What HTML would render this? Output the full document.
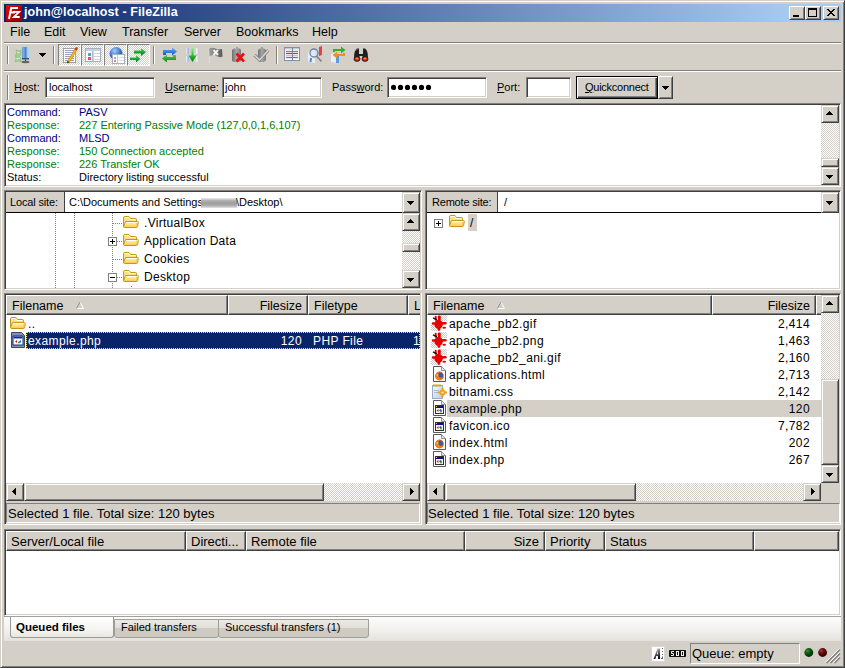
<!DOCTYPE html><html><head><meta charset="utf-8"><style>
html,body{margin:0;padding:0;width:845px;height:668px;overflow:hidden;background:#d4d0c8;}
body{position:relative;font-family:"Liberation Sans",sans-serif;font-size:11px;}
body div{position:absolute;box-sizing:border-box;}
svg{position:absolute;}
</style></head><body>
<div style="left:0px;top:0px;width:845px;height:668px;border:1px solid;border-color:#d4d0c8 #404040 #404040 #d4d0c8;box-shadow:inset 1px 1px #fff,inset -1px -1px #808080;"></div>
<div style="left:4px;top:4px;width:837px;height:18px;background:linear-gradient(to right,#0a246a,#a6caf0 94%);"></div>
<svg style="left:6px;top:5px" width="16" height="16" viewBox="0 0 16 16"><defs><linearGradient id="fzg" x1="0" y1="0" x2="1" y2="1"><stop offset="0" stop-color="#e80808"/><stop offset="1" stop-color="#8c0000"/></linearGradient></defs><rect width="16" height="16" fill="url(#fzg)"/><g stroke="#fff" fill="none" stroke-width="2" stroke-linecap="square"><path d="M3.2 13 L5.2 3 H11"/><path d="M4.3 7.5 H8"/><path d="M7.8 6.8 H13.2 L7.8 12 H12.8" stroke-width="1.8" stroke-linejoin="miter"/></g></svg>
<div style="left:24px;top:5px;font-size:12.5px;line-height:14.5px;color:#fff;font-weight:700;white-space:pre;line-height:14px;letter-spacing:0.1px;">john@localhost - FileZilla</div>
<div style="left:789px;top:6px;width:16px;height:14px;border:1px solid;border-color:#fff #404040 #404040 #fff;box-shadow:inset 1px 1px #d4d0c8,inset -1px -1px #808080;background:#d4d0c8;"></div>
<div style="left:805px;top:6px;width:16px;height:14px;border:1px solid;border-color:#fff #404040 #404040 #fff;box-shadow:inset 1px 1px #d4d0c8,inset -1px -1px #808080;background:#d4d0c8;"></div>
<div style="left:823px;top:6px;width:16px;height:14px;border:1px solid;border-color:#fff #404040 #404040 #fff;box-shadow:inset 1px 1px #d4d0c8,inset -1px -1px #808080;background:#d4d0c8;"></div>
<div style="left:793px;top:15px;width:6px;height:2px;background:#000"></div>
<div style="left:808px;top:8px;width:9px;height:9px;border:1px solid #000;border-top-width:2px"></div>
<svg style="left:827px;top:9px" width="8" height="7" fill="#000" shape-rendering="crispEdges"><rect x="0" y="0" width="1" height="1"/><rect x="1" y="0" width="1" height="1"/><rect x="6" y="0" width="1" height="1"/><rect x="7" y="0" width="1" height="1"/><rect x="1" y="1" width="1" height="1"/><rect x="2" y="1" width="1" height="1"/><rect x="5" y="1" width="1" height="1"/><rect x="6" y="1" width="1" height="1"/><rect x="2" y="2" width="1" height="1"/><rect x="3" y="2" width="1" height="1"/><rect x="4" y="2" width="1" height="1"/><rect x="5" y="2" width="1" height="1"/><rect x="3" y="3" width="1" height="1"/><rect x="4" y="3" width="1" height="1"/><rect x="2" y="4" width="1" height="1"/><rect x="3" y="4" width="1" height="1"/><rect x="4" y="4" width="1" height="1"/><rect x="5" y="4" width="1" height="1"/><rect x="1" y="5" width="1" height="1"/><rect x="2" y="5" width="1" height="1"/><rect x="5" y="5" width="1" height="1"/><rect x="6" y="5" width="1" height="1"/><rect x="0" y="6" width="1" height="1"/><rect x="1" y="6" width="1" height="1"/><rect x="6" y="6" width="1" height="1"/><rect x="7" y="6" width="1" height="1"/></svg>
<div style="left:10px;top:25px;font-size:12.5px;line-height:14.5px;color:#000;font-weight:400;white-space:pre;">File</div>
<div style="left:44px;top:25px;font-size:12.5px;line-height:14.5px;color:#000;font-weight:400;white-space:pre;">Edit</div>
<div style="left:80px;top:25px;font-size:12.5px;line-height:14.5px;color:#000;font-weight:400;white-space:pre;">View</div>
<div style="left:122px;top:25px;font-size:12.5px;line-height:14.5px;color:#000;font-weight:400;white-space:pre;">Transfer</div>
<div style="left:184px;top:25px;font-size:12.5px;line-height:14.5px;color:#000;font-weight:400;white-space:pre;">Server</div>
<div style="left:236px;top:25px;font-size:12.5px;line-height:14.5px;color:#000;font-weight:400;white-space:pre;">Bookmarks</div>
<div style="left:312px;top:25px;font-size:12.5px;line-height:14.5px;color:#000;font-weight:400;white-space:pre;">Help</div>
<div style="left:4px;top:42px;width:837px;height:1px;background:#808080"></div>
<div style="left:4px;top:43px;width:837px;height:1px;background:#fff"></div>
<div style="left:7px;top:46px;width:1px;height:18px;background:#808080"></div>
<div style="left:8px;top:46px;width:1px;height:18px;background:#fff"></div>
<div style="left:53px;top:46px;width:1px;height:18px;background:#808080"></div>
<div style="left:54px;top:46px;width:1px;height:18px;background:#fff"></div>
<div style="left:153px;top:46px;width:1px;height:18px;background:#808080"></div>
<div style="left:154px;top:46px;width:1px;height:18px;background:#fff"></div>
<div style="left:276px;top:46px;width:1px;height:18px;background:#808080"></div>
<div style="left:277px;top:46px;width:1px;height:18px;background:#fff"></div>
<div style="left:39px;top:53px;width:7px;height:1px;background:#000"></div>
<div style="left:40px;top:54px;width:5px;height:1px;background:#000"></div>
<div style="left:41px;top:55px;width:3px;height:1px;background:#000"></div>
<div style="left:42px;top:56px;width:1px;height:1px;background:#000"></div>
<div style="left:58px;top:44px;width:23px;height:22px;border:1px solid;border-color:#808080 #fff #fff #808080;background:repeating-conic-gradient(#fff 0 25%,#d4d0c8 0 50%) 0 0/2px 2px;"></div>
<div style="left:81px;top:44px;width:23px;height:22px;border:1px solid;border-color:#808080 #fff #fff #808080;background:repeating-conic-gradient(#fff 0 25%,#d4d0c8 0 50%) 0 0/2px 2px;"></div>
<div style="left:104px;top:44px;width:23px;height:22px;border:1px solid;border-color:#808080 #fff #fff #808080;background:repeating-conic-gradient(#fff 0 25%,#d4d0c8 0 50%) 0 0/2px 2px;"></div>
<div style="left:127px;top:44px;width:23px;height:22px;border:1px solid;border-color:#808080 #fff #fff #808080;background:repeating-conic-gradient(#fff 0 25%,#d4d0c8 0 50%) 0 0/2px 2px;"></div>
<div style="left:4px;top:70px;width:837px;height:1px;background:#808080"></div>
<div style="left:4px;top:71px;width:837px;height:1px;background:#fff"></div>
<svg style="left:13px;top:46px" width="18" height="18" viewBox="0 0 18 18"><defs><linearGradient id="srv" x1="0" x2="1"><stop offset="0" stop-color="#6c98dc"/><stop offset="0.5" stop-color="#9cc0ec"/><stop offset="1" stop-color="#a8d4f0"/></linearGradient></defs><path d="M3 4 L6 5 L8 4 L8 9 L6 10 L8 12 L8 16 L5 15 L2 16 L3 12 L2 9 L4 8 Z" fill="#9ccf8c" stroke="#8fb67f" stroke-width="0.6"/><path d="M4 6 L7 7 M3 13 L7 12" stroke="#d8f0d0" stroke-width="1"/><rect x="9" y="1" width="7" height="12" fill="url(#srv)"/><rect x="11.5" y="1" width="2" height="12" fill="#4f7fc8"/><rect x="9" y="12" width="7" height="1.5" fill="#2a4f90"/><rect x="12" y="13.5" width="1" height="1.5" fill="#404040"/><ellipse cx="12.5" cy="16" rx="4" ry="1.2" fill="#404040" opacity="0.75"/></svg>
<svg style="left:62px;top:47px" width="17" height="17" viewBox="0 0 17 17"><rect x="1.5" y="1.5" width="12" height="14" fill="#fff" stroke="#a0a0a0"/><path d="M3 3.5 h9" stroke="#9aa0c0" stroke-width="1"/><path d="M3 5.5 h9" stroke="#9aa0c0" stroke-width="1"/><path d="M3 7.5 h9" stroke="#9aa0c0" stroke-width="1"/><path d="M3 9.5 h9" stroke="#9aa0c0" stroke-width="1"/><path d="M3 11.5 h9" stroke="#9aa0c0" stroke-width="1"/><path d="M3 13.5 h9" stroke="#9aa0c0" stroke-width="1"/><path d="M6 15.5 L14.5 1.5" stroke="#d09000" stroke-width="2.6"/><path d="M6 15.5 L14.5 1.5" stroke="#f8c020" stroke-width="1.4"/><path d="M13.5 3 L15 0.5" stroke="#c04020" stroke-width="2.4"/><path d="M5.5 16 L6.5 14.5" stroke="#303030" stroke-width="1.5"/></svg>
<svg style="left:84px;top:47px" width="17" height="16" viewBox="0 0 17 16"><rect x="1.5" y="1.5" width="15" height="13" fill="#fff" stroke="#a8b0c0"/><rect x="2" y="2" width="14" height="2" fill="#c8d0dc"/><rect x="8" y="4" width="1.6" height="10" fill="#b0b8c8"/><rect x="4" y="6" width="3" height="3" fill="#5a9ae0"/><rect x="4" y="10" width="3" height="3" fill="#e05060"/><path d="M10 6.5 h6 M10 9.5 h6 M10 12.5 h6" stroke="#d0d4da" stroke-width="1"/></svg>
<svg style="left:108px;top:46px" width="17" height="18" viewBox="0 0 17 18"><defs><radialGradient id="glb" cx="0.4" cy="0.3" r="0.7"><stop offset="0" stop-color="#a8ccf8"/><stop offset="0.6" stop-color="#3a78d8"/><stop offset="1" stop-color="#1848a8"/></radialGradient></defs><circle cx="8" cy="7.5" r="6.5" fill="url(#glb)"/><rect x="4.5" y="8.5" width="12" height="9" fill="#fff" stroke="#a8b0c0"/><rect x="9" y="9" width="1" height="8" fill="#c0c8d8"/><rect x="6" y="11" width="2" height="2" fill="#8ab0e0"/><rect x="6" y="14" width="2" height="2" fill="#f08080"/><path d="M11 11.5 h5 M11 14.5 h5" stroke="#d8dce2"/></svg>
<svg style="left:129px;top:47px" width="18" height="17" viewBox="0 0 18 17"><defs><linearGradient id="ga" x1="0" y1="0" x2="0" y2="1"><stop offset="0" stop-color="#60e060"/><stop offset="0.6" stop-color="#10a020"/><stop offset="1" stop-color="#087018"/></linearGradient></defs><path d="M5 3.5 h7 v-2.5 l5 4 l-5 4 v-2.5 h-7 z" fill="url(#ga)"/><path d="M1 10.5 h6 v-2.5 l4.5 3.7 l-4.5 3.8 v-2.5 h-6 z" fill="url(#ga)"/></svg>
<svg style="left:161px;top:46px" width="17" height="18" viewBox="0 0 17 18"><defs><linearGradient id="rb" x1="0" y1="0" x2="0" y2="1"><stop offset="0" stop-color="#70b0f8"/><stop offset="1" stop-color="#1050c8"/></linearGradient><linearGradient id="rg" x1="0" y1="0" x2="0" y2="1"><stop offset="0" stop-color="#50d050"/><stop offset="1" stop-color="#108020"/></linearGradient></defs><path d="M2 9 V4 h9 V1.5 l5 4 l-5 4 V7 H5 v2 z" fill="url(#rb)"/><path d="M15 9 v5 h-9 v2.5 l-5 -4 l5 -4 V11 h6 V9 z" fill="url(#rg)"/></svg>
<svg style="left:184px;top:46px" width="17" height="18" viewBox="0 0 17 18"><defs><linearGradient id="pq" x1="0" y1="0" x2="0" y2="1"><stop offset="0" stop-color="#a0f8a0"/><stop offset="0.5" stop-color="#30c030"/><stop offset="1" stop-color="#087818"/></linearGradient><linearGradient id="pqb" x1="0" x2="1"><stop offset="0" stop-color="#f0f8ff"/><stop offset="1" stop-color="#80b0e0"/></linearGradient><linearGradient id="pqw" x1="0" x2="1"><stop offset="0" stop-color="#ffffff"/><stop offset="1" stop-color="#c0c0c0"/></linearGradient></defs><path d="M2.5 2 h2 v6 h-2.5 z M2 10 h2.5 v6 h-2.5 z" fill="url(#pqb)"/><path d="M12 2 h2.5 l0.5 6 h-3 z M12 10 h3 l-0.5 6 h-2.5 z" fill="url(#pqw)"/><path d="M7.5 1 h2 v8.5 h3 l-4 6.5 l-4 -6.5 h3 z" fill="url(#pq)"/></svg>
<svg style="left:208px;top:46px" width="16" height="18" viewBox="0 0 16 18"><defs><linearGradient id="flg" x1="0" x2="1"><stop offset="0" stop-color="#a0a0a0"/><stop offset="0.5" stop-color="#7a7a7a"/><stop offset="1" stop-color="#5a5a5a"/></linearGradient></defs><path d="M1 2 L1.5 17" stroke="#e0e0e0"/><path d="M1 2.5 Q4 1 7.5 2.5 T14 3 L14.5 10.5 Q11.5 12 8.5 10 T1.5 10.5 Z" fill="url(#flg)"/><path d="M5.5 4 L10 9 M10 4 L5.5 9" stroke="#f4f4f4" stroke-width="2"/></svg>
<svg style="left:231px;top:46px" width="16" height="18" viewBox="0 0 16 18"><defs><linearGradient id="dev" x1="0" x2="1"><stop offset="0" stop-color="#707070"/><stop offset="0.5" stop-color="#a8a8a8"/><stop offset="1" stop-color="#787878"/></linearGradient></defs><path d="M1 4 L3 2.5 h2 V1 h2 v1.5 h2 L10 4 V15 L8 16 H3 L1 15 Z" fill="url(#dev)"/><path d="M5.5 7.5 L13 15.5 M13 7.5 L5.5 15.5" stroke="#e81010" stroke-width="2.6"/></svg>
<svg style="left:253px;top:46px" width="17" height="18" viewBox="0 0 17 18"><path d="M5 4 L7 2.5 h1 V1 h2 v1.5 h1 L13 4 V14 L11 16 H7 L5 14 Z" fill="url(#dev)"/><path d="M1.5 9 L6.5 14 L15.5 4" stroke="#8a8a8a" stroke-width="3.2" fill="none"/><path d="M1.5 9 L6.5 14 L15.5 4" stroke="#d8d8d8" stroke-width="1.4" fill="none"/></svg>
<svg style="left:284px;top:47px" width="17" height="15" viewBox="0 0 17 15"><rect x="0.5" y="0.5" width="15" height="13" fill="#f8f8ff" stroke="#8c8c9c"/><rect x="1" y="1" width="14" height="1.5" fill="#c8ccd8"/><path d="M2 4.5 h12" stroke="#30c030" stroke-width="1.2"/><path d="M2 6.5 h12" stroke="#e03030" stroke-width="1.2"/><path d="M2 8.5 h12" stroke="#f0d020" stroke-width="1.2"/><path d="M2 10.5 h12" stroke="#3080e0" stroke-width="1.2"/><rect x="8" y="1" width="1" height="12" fill="#7880a0"/></svg>
<svg style="left:307px;top:46px" width="17" height="18" viewBox="0 0 17 18"><path d="M12 1 L15 0 V9 L12 10 Z" fill="#e04050"/><path d="M1 6 L8 3 V17 L1 16 Z" fill="#e8eef4"/><path d="M9.5 10 L14.5 15.5" stroke="#808080" stroke-width="1.6"/><circle cx="7" cy="7" r="4" fill="#d8e8f8" fill-opacity="0.6" stroke="#6880a0" stroke-width="1.3"/><path d="M4 12 L3.5 16" stroke="#4a8ad0" stroke-width="2"/></svg>
<svg style="left:330px;top:45px" width="17" height="19" viewBox="0 0 17 19"><path d="M1 9 L7 7 V18 L1 17 Z" fill="#e8eef8"/><path d="M6 9 h3 v9 h-3z" fill="#5a9ae0"/><path d="M3 7 V4 h8 V1.5 l4.5 3.5 l-4.5 3.5 V6 H5 v1 z" fill="#30b030"/><path d="M15 8 v3 H7 v2.5 l-4.5 -3.5 l4.5 -3.5 V9 h6 V8 z" fill="#f09020"/></svg>
<svg style="left:353px;top:47px" width="16" height="16" viewBox="0 0 16 16"><path d="M1 11 Q1 3 4 1.5 h2 V7 h4 V1.5 h2 Q15 3 15 11 h-5.5 V9 h-3 v2 Z" fill="#202020"/><path d="M2.5 4 Q3.5 2 5 2" stroke="#808080" stroke-width="0.8" fill="none"/><ellipse cx="4" cy="12" rx="3" ry="2.3" fill="#d02000" stroke="#202020"/><ellipse cx="12" cy="12" rx="3" ry="2.3" fill="#d02000" stroke="#202020"/><ellipse cx="4" cy="11.6" rx="1.6" ry="1" fill="#ff8040"/><ellipse cx="12" cy="11.6" rx="1.6" ry="1" fill="#ff8040"/></svg>
<div style="left:7px;top:75px;width:1px;height:25px;background:#808080"></div>
<div style="left:8px;top:75px;width:1px;height:25px;background:#fff"></div>
<div style="left:14px;top:81px;font-size:11px;line-height:13px;color:#000;font-weight:400;white-space:pre;"><u>H</u>ost:</div>
<div style="left:45px;top:77px;width:110px;height:21px;border:1px solid;border-color:#808080 #fff #fff #808080;box-shadow:inset 1px 1px #404040,inset -1px -1px #d4d0c8;background:#fff;"></div>
<div style="left:49px;top:81px;font-size:11px;line-height:13px;color:#000;font-weight:400;white-space:pre;">localhost</div>
<div style="left:165px;top:81px;font-size:11px;line-height:13px;color:#000;font-weight:400;white-space:pre;"><u>U</u>sername:</div>
<div style="left:222px;top:77px;width:100px;height:21px;border:1px solid;border-color:#808080 #fff #fff #808080;box-shadow:inset 1px 1px #404040,inset -1px -1px #d4d0c8;background:#fff;"></div>
<div style="left:225px;top:81px;font-size:11px;line-height:13px;color:#000;font-weight:400;white-space:pre;">john</div>
<div style="left:332px;top:81px;font-size:11px;line-height:13px;color:#000;font-weight:400;white-space:pre;">Pass<u>w</u>ord:</div>
<div style="left:387px;top:77px;width:100px;height:21px;border:1px solid;border-color:#808080 #fff #fff #808080;box-shadow:inset 1px 1px #404040,inset -1px -1px #d4d0c8;background:#fff;"></div>
<svg style="left:391px;top:83px" width="50" height="9"><circle cx="2.5" cy="4.4" r="2.6" fill="#000"/><circle cx="9.5" cy="4.4" r="2.6" fill="#000"/><circle cx="16.5" cy="4.4" r="2.6" fill="#000"/><circle cx="23.5" cy="4.4" r="2.6" fill="#000"/><circle cx="30.5" cy="4.4" r="2.6" fill="#000"/><circle cx="37.5" cy="4.4" r="2.6" fill="#000"/></svg>
<div style="left:497px;top:81px;font-size:11px;line-height:13px;color:#000;font-weight:400;white-space:pre;"><u>P</u>ort:</div>
<div style="left:526px;top:77px;width:45px;height:21px;border:1px solid;border-color:#808080 #fff #fff #808080;box-shadow:inset 1px 1px #404040,inset -1px -1px #d4d0c8;background:#fff;"></div>
<div style="left:576px;top:76px;width:82px;height:23px;border:1px solid #000;box-shadow:inset 1px 1px #fff,inset -1px -1px #404040,inset -2px -2px #808080;background:#d4d0c8"></div>
<div style="left:585px;top:81px;font-size:11px;line-height:13px;color:#000;font-weight:400;white-space:pre;letter-spacing:-0.25px;"><u>Q</u>uickconnect</div>
<div style="left:658px;top:76px;width:15px;height:23px;border:1px solid;border-color:#fff #404040 #404040 #fff;box-shadow:inset 1px 1px #d4d0c8,inset -1px -1px #808080;background:#d4d0c8;"></div>
<div style="left:662px;top:86px;width:7px;height:1px;background:#000"></div>
<div style="left:663px;top:87px;width:5px;height:1px;background:#000"></div>
<div style="left:664px;top:88px;width:3px;height:1px;background:#000"></div>
<div style="left:665px;top:89px;width:1px;height:1px;background:#000"></div>
<div style="left:4px;top:103px;width:837px;height:84px;border:1px solid;border-color:#808080 #fff #fff #808080;box-shadow:inset 1px 1px #404040,inset -1px -1px #d4d0c8;background:#fff;"></div>
<div style="left:7px;top:106px;font-size:11px;line-height:13px;color:#000080;font-weight:400;white-space:pre;">Command:</div>
<div style="left:79px;top:106px;font-size:11px;line-height:13px;color:#000080;font-weight:400;white-space:pre;">PASV</div>
<div style="left:7px;top:119px;font-size:11px;line-height:13px;color:#008000;font-weight:400;white-space:pre;">Response:</div>
<div style="left:79px;top:119px;font-size:11px;line-height:13px;color:#008000;font-weight:400;white-space:pre;">227 Entering Passive Mode (127,0,0,1,6,107)</div>
<div style="left:7px;top:132px;font-size:11px;line-height:13px;color:#000080;font-weight:400;white-space:pre;">Command:</div>
<div style="left:79px;top:132px;font-size:11px;line-height:13px;color:#000080;font-weight:400;white-space:pre;">MLSD</div>
<div style="left:7px;top:145px;font-size:11px;line-height:13px;color:#008000;font-weight:400;white-space:pre;">Response:</div>
<div style="left:79px;top:145px;font-size:11px;line-height:13px;color:#008000;font-weight:400;white-space:pre;">150 Connection accepted</div>
<div style="left:7px;top:158px;font-size:11px;line-height:13px;color:#008000;font-weight:400;white-space:pre;">Response:</div>
<div style="left:79px;top:158px;font-size:11px;line-height:13px;color:#008000;font-weight:400;white-space:pre;">226 Transfer OK</div>
<div style="left:7px;top:171px;font-size:11px;line-height:13px;color:#000;font-weight:400;white-space:pre;">Status:</div>
<div style="left:79px;top:171px;font-size:11px;line-height:13px;color:#000;font-weight:400;white-space:pre;">Directory listing successful</div>
<div style="left:821px;top:105px;width:18px;height:80px;background:repeating-conic-gradient(#fff 0 25%,#d4d0c8 0 50%) 0 0/2px 2px;"></div>
<div style="left:821px;top:105px;width:18px;height:18px;border:1px solid;border-color:#d4d0c8 #404040 #404040 #d4d0c8;box-shadow:inset 1px 1px #fff,inset -1px -1px #808080;background:#d4d0c8;"></div>
<div style="left:829px;top:111px;width:1px;height:1px;background:#000"></div>
<div style="left:828px;top:112px;width:3px;height:1px;background:#000"></div>
<div style="left:827px;top:113px;width:5px;height:1px;background:#000"></div>
<div style="left:826px;top:114px;width:7px;height:1px;background:#000"></div>
<div style="left:821px;top:167px;width:18px;height:18px;border:1px solid;border-color:#d4d0c8 #404040 #404040 #d4d0c8;box-shadow:inset 1px 1px #fff,inset -1px -1px #808080;background:#d4d0c8;"></div>
<div style="left:826px;top:175px;width:7px;height:1px;background:#000"></div>
<div style="left:827px;top:176px;width:5px;height:1px;background:#000"></div>
<div style="left:828px;top:177px;width:3px;height:1px;background:#000"></div>
<div style="left:829px;top:178px;width:1px;height:1px;background:#000"></div>
<div style="left:821px;top:158px;width:18px;height:9px;border:1px solid;border-color:#d4d0c8 #404040 #404040 #d4d0c8;box-shadow:inset 1px 1px #fff,inset -1px -1px #808080;background:#d4d0c8;"></div>
<div style="left:4px;top:190px;width:418px;height:100px;border:1px solid;border-color:#808080 #fff #fff #808080;box-shadow:inset 1px 1px #404040,inset -1px -1px #d4d0c8;background:#fff;"></div>
<div style="left:6px;top:192px;width:58px;height:20px;background:#d4d0c8"></div>
<div style="left:10px;top:196px;font-size:11px;line-height:13px;color:#000;font-weight:400;white-space:pre;letter-spacing:-0.15px;">Local site:</div>
<div style="left:64px;top:192px;width:1px;height:20px;background:#404040"></div>
<div style="left:6px;top:212px;width:396px;height:1px;background:#000"></div>
<div style="left:69px;top:196px;font-size:11px;line-height:13px;color:#000;font-weight:400;white-space:pre;">C:\Documents and Settings</div>
<div style="left:201px;top:198px;width:36px;height:10px;background:linear-gradient(#ececec,#b4b4b4 25%,#9c9c9c 50%,#acacac 75%,#e4e4e4)"></div>
<div style="left:236px;top:196px;font-size:11px;line-height:13px;color:#000;font-weight:400;white-space:pre;">\Desktop\</div>
<div style="left:402px;top:192px;width:18px;height:21px;border:1px solid;border-color:#d4d0c8 #404040 #404040 #d4d0c8;box-shadow:inset 1px 1px #fff,inset -1px -1px #808080;background:#d4d0c8;"></div>
<div style="left:407px;top:201px;width:7px;height:1px;background:#000"></div>
<div style="left:408px;top:202px;width:5px;height:1px;background:#000"></div>
<div style="left:409px;top:203px;width:3px;height:1px;background:#000"></div>
<div style="left:410px;top:204px;width:1px;height:1px;background:#000"></div>
<div style="left:402px;top:213px;width:18px;height:75px;background:repeating-conic-gradient(#fff 0 25%,#d4d0c8 0 50%) 0 0/2px 2px;"></div>
<div style="left:402px;top:213px;width:18px;height:18px;border:1px solid;border-color:#d4d0c8 #404040 #404040 #d4d0c8;box-shadow:inset 1px 1px #fff,inset -1px -1px #808080;background:#d4d0c8;"></div>
<div style="left:410px;top:219px;width:1px;height:1px;background:#000"></div>
<div style="left:409px;top:220px;width:3px;height:1px;background:#000"></div>
<div style="left:408px;top:221px;width:5px;height:1px;background:#000"></div>
<div style="left:407px;top:222px;width:7px;height:1px;background:#000"></div>
<div style="left:402px;top:270px;width:18px;height:18px;border:1px solid;border-color:#d4d0c8 #404040 #404040 #d4d0c8;box-shadow:inset 1px 1px #fff,inset -1px -1px #808080;background:#d4d0c8;"></div>
<div style="left:407px;top:278px;width:7px;height:1px;background:#000"></div>
<div style="left:408px;top:279px;width:5px;height:1px;background:#000"></div>
<div style="left:409px;top:280px;width:3px;height:1px;background:#000"></div>
<div style="left:410px;top:281px;width:1px;height:1px;background:#000"></div>
<div style="left:402px;top:243px;width:18px;height:9px;border:1px solid;border-color:#d4d0c8 #404040 #404040 #d4d0c8;box-shadow:inset 1px 1px #fff,inset -1px -1px #808080;background:#d4d0c8;"></div>
<div style="left:55px;top:213px;width:1px;height:75px;background:repeating-linear-gradient(to bottom,#808080 0 1px,transparent 1px 2px)"></div>
<div style="left:74px;top:213px;width:1px;height:75px;background:repeating-linear-gradient(to bottom,#808080 0 1px,transparent 1px 2px)"></div>
<div style="left:112px;top:213px;width:1px;height:75px;background:repeating-linear-gradient(to bottom,#808080 0 1px,transparent 1px 2px)"></div>
<div style="left:131px;top:286px;width:1px;height:2px;background:repeating-linear-gradient(to bottom,#808080 0 1px,transparent 1px 2px)"></div>
<div style="left:113px;top:223px;width:10px;height:1px;background:repeating-linear-gradient(to right,#808080 0 1px,transparent 1px 2px)"></div>
<svg style="left:123px;top:214px" width="17" height="16" viewBox="0 0 17 16"><defs><linearGradient id="fg123214" x1="0" y1="0" x2="0" y2="1"><stop offset="0" stop-color="#fff6c0"/><stop offset="0.5" stop-color="#fde47a"/><stop offset="1" stop-color="#f6c84a"/></linearGradient></defs><path d="M0.5 4 Q0.5 2.5 2 2.5 H6 L7.5 4.5 H12.5 Q13.5 4.5 13.5 5.5 V12.5 H0.5 Z" fill="#f8e090" stroke="#c8961a"/><path d="M1.5 3.5 H5.8 L6.8 5.5 H12" stroke="#fffbe8" fill="none"/><path d="M2.5 7.5 H14.5 Q15.5 7.5 15.3 8.5 L14.6 12.5 Q14.5 13.5 13.5 13.5 H1.5 Q0.5 13.5 0.6 12.5 Z" fill="url(#fg123214)" stroke="#c8961a"/><path d="M3 8.5 H14.3" stroke="#fffef0"/><path d="M14 8.5 V13" stroke="#e8b040" stroke-width="0.8"/></svg>
<div style="left:144px;top:216px;font-size:12px;line-height:14px;color:#000;font-weight:400;white-space:pre;letter-spacing:0.3px;">.VirtualBox</div>
<div style="left:113px;top:241px;width:10px;height:1px;background:repeating-linear-gradient(to right,#808080 0 1px,transparent 1px 2px)"></div>
<svg style="left:123px;top:232px" width="17" height="16" viewBox="0 0 17 16"><defs><linearGradient id="fg123232" x1="0" y1="0" x2="0" y2="1"><stop offset="0" stop-color="#fff6c0"/><stop offset="0.5" stop-color="#fde47a"/><stop offset="1" stop-color="#f6c84a"/></linearGradient></defs><path d="M0.5 4 Q0.5 2.5 2 2.5 H6 L7.5 4.5 H12.5 Q13.5 4.5 13.5 5.5 V12.5 H0.5 Z" fill="#f8e090" stroke="#c8961a"/><path d="M1.5 3.5 H5.8 L6.8 5.5 H12" stroke="#fffbe8" fill="none"/><path d="M2.5 7.5 H14.5 Q15.5 7.5 15.3 8.5 L14.6 12.5 Q14.5 13.5 13.5 13.5 H1.5 Q0.5 13.5 0.6 12.5 Z" fill="url(#fg123232)" stroke="#c8961a"/><path d="M3 8.5 H14.3" stroke="#fffef0"/><path d="M14 8.5 V13" stroke="#e8b040" stroke-width="0.8"/></svg>
<div style="left:144px;top:234px;font-size:12px;line-height:14px;color:#000;font-weight:400;white-space:pre;letter-spacing:0.3px;">Application Data</div>
<div style="left:113px;top:259px;width:10px;height:1px;background:repeating-linear-gradient(to right,#808080 0 1px,transparent 1px 2px)"></div>
<svg style="left:123px;top:250px" width="17" height="16" viewBox="0 0 17 16"><defs><linearGradient id="fg123250" x1="0" y1="0" x2="0" y2="1"><stop offset="0" stop-color="#fff6c0"/><stop offset="0.5" stop-color="#fde47a"/><stop offset="1" stop-color="#f6c84a"/></linearGradient></defs><path d="M0.5 4 Q0.5 2.5 2 2.5 H6 L7.5 4.5 H12.5 Q13.5 4.5 13.5 5.5 V12.5 H0.5 Z" fill="#f8e090" stroke="#c8961a"/><path d="M1.5 3.5 H5.8 L6.8 5.5 H12" stroke="#fffbe8" fill="none"/><path d="M2.5 7.5 H14.5 Q15.5 7.5 15.3 8.5 L14.6 12.5 Q14.5 13.5 13.5 13.5 H1.5 Q0.5 13.5 0.6 12.5 Z" fill="url(#fg123250)" stroke="#c8961a"/><path d="M3 8.5 H14.3" stroke="#fffef0"/><path d="M14 8.5 V13" stroke="#e8b040" stroke-width="0.8"/></svg>
<div style="left:144px;top:252px;font-size:12px;line-height:14px;color:#000;font-weight:400;white-space:pre;letter-spacing:0.3px;">Cookies</div>
<div style="left:113px;top:277px;width:10px;height:1px;background:repeating-linear-gradient(to right,#808080 0 1px,transparent 1px 2px)"></div>
<svg style="left:123px;top:268px" width="17" height="16" viewBox="0 0 17 16"><defs><linearGradient id="fg123268" x1="0" y1="0" x2="0" y2="1"><stop offset="0" stop-color="#fff6c0"/><stop offset="0.5" stop-color="#fde47a"/><stop offset="1" stop-color="#f6c84a"/></linearGradient></defs><path d="M0.5 4 Q0.5 2.5 2 2.5 H6 L7.5 4.5 H12.5 Q13.5 4.5 13.5 5.5 V12.5 H0.5 Z" fill="#f8e090" stroke="#c8961a"/><path d="M1.5 3.5 H5.8 L6.8 5.5 H12" stroke="#fffbe8" fill="none"/><path d="M2.5 7.5 H14.5 Q15.5 7.5 15.3 8.5 L14.6 12.5 Q14.5 13.5 13.5 13.5 H1.5 Q0.5 13.5 0.6 12.5 Z" fill="url(#fg123268)" stroke="#c8961a"/><path d="M3 8.5 H14.3" stroke="#fffef0"/><path d="M14 8.5 V13" stroke="#e8b040" stroke-width="0.8"/></svg>
<div style="left:144px;top:270px;font-size:12px;line-height:14px;color:#000;font-weight:400;white-space:pre;letter-spacing:0.3px;">Desktop</div>
<div style="left:108px;top:237px;width:9px;height:9px;border:1px solid #808080;background:#fff"></div>
<div style="left:110px;top:241px;width:5px;height:1px;background:#000"></div>
<div style="left:112px;top:239px;width:1px;height:5px;background:#000"></div>
<div style="left:108px;top:273px;width:9px;height:9px;border:1px solid #808080;background:#fff"></div>
<div style="left:110px;top:277px;width:5px;height:1px;background:#000"></div>
<div style="left:425px;top:190px;width:416px;height:100px;border:1px solid;border-color:#808080 #fff #fff #808080;box-shadow:inset 1px 1px #404040,inset -1px -1px #d4d0c8;background:#fff;"></div>
<div style="left:427px;top:192px;width:70px;height:20px;background:#d4d0c8"></div>
<div style="left:432px;top:196px;font-size:11px;line-height:13px;color:#000;font-weight:400;white-space:pre;letter-spacing:-0.2px;">Remote site:</div>
<div style="left:497px;top:192px;width:1px;height:20px;background:#404040"></div>
<div style="left:427px;top:212px;width:412px;height:1px;background:#000"></div>
<div style="left:504px;top:196px;font-size:11px;line-height:13px;color:#000;font-weight:400;white-space:pre;">/</div>
<div style="left:821px;top:192px;width:18px;height:21px;border:1px solid;border-color:#d4d0c8 #404040 #404040 #d4d0c8;box-shadow:inset 1px 1px #fff,inset -1px -1px #808080;background:#d4d0c8;"></div>
<div style="left:826px;top:201px;width:7px;height:1px;background:#000"></div>
<div style="left:827px;top:202px;width:5px;height:1px;background:#000"></div>
<div style="left:828px;top:203px;width:3px;height:1px;background:#000"></div>
<div style="left:829px;top:204px;width:1px;height:1px;background:#000"></div>
<div style="left:434px;top:219px;width:9px;height:9px;border:1px solid #808080;background:#fff"></div>
<div style="left:436px;top:223px;width:5px;height:1px;background:#000"></div>
<div style="left:438px;top:221px;width:1px;height:5px;background:#000"></div>
<svg style="left:449px;top:213px" width="17" height="16" viewBox="0 0 17 16"><defs><linearGradient id="fg449213" x1="0" y1="0" x2="0" y2="1"><stop offset="0" stop-color="#fff6c0"/><stop offset="0.5" stop-color="#fde47a"/><stop offset="1" stop-color="#f6c84a"/></linearGradient></defs><path d="M0.5 4 Q0.5 2.5 2 2.5 H6 L7.5 4.5 H12.5 Q13.5 4.5 13.5 5.5 V12.5 H0.5 Z" fill="#f8e090" stroke="#c8961a"/><path d="M1.5 3.5 H5.8 L6.8 5.5 H12" stroke="#fffbe8" fill="none"/><path d="M2.5 7.5 H14.5 Q15.5 7.5 15.3 8.5 L14.6 12.5 Q14.5 13.5 13.5 13.5 H1.5 Q0.5 13.5 0.6 12.5 Z" fill="url(#fg449213)" stroke="#c8961a"/><path d="M3 8.5 H14.3" stroke="#fffef0"/><path d="M14 8.5 V13" stroke="#e8b040" stroke-width="0.8"/></svg>
<div style="left:468px;top:214px;width:9px;height:17px;background:#d4d0c8"></div>
<div style="left:470px;top:216px;font-size:12px;line-height:14px;color:#000;font-weight:400;white-space:pre;">/</div>
<div style="left:4px;top:293px;width:418px;height:232px;border:1px solid;border-color:#808080 #fff #fff #808080;box-shadow:inset 1px 1px #404040,inset -1px -1px #d4d0c8;background:#d4d0c8;"></div>
<div style="left:6px;top:315px;width:414px;height:168px;background:#fff"></div>
<div style="left:6px;top:295px;width:222px;height:20px;border-style:solid;border-width:1px 1px 1px 1px;border-color:#fff #404040 #404040 #fff;box-shadow:inset -1px -1px #808080;background:#d4d0c8"></div>
<div style="left:12px;top:299px;font-size:12.5px;line-height:14.5px;color:#000;font-weight:400;white-space:pre;">Filename</div>
<div style="left:228px;top:295px;width:80px;height:20px;border-style:solid;border-width:1px 1px 1px 1px;border-color:#fff #404040 #404040 #fff;box-shadow:inset -1px -1px #808080;background:#d4d0c8"></div>
<div style="right:543px;top:299px;font-size:12.5px;line-height:14.5px;color:#000;white-space:pre;text-align:right;">Filesize</div>
<div style="left:308px;top:295px;width:100px;height:20px;border-style:solid;border-width:1px 1px 1px 1px;border-color:#fff #404040 #404040 #fff;box-shadow:inset -1px -1px #808080;background:#d4d0c8"></div>
<div style="left:314px;top:299px;font-size:12.5px;line-height:14.5px;color:#000;font-weight:400;white-space:pre;">Filetype</div>
<div style="left:408px;top:295px;width:33px;height:20px;border-style:solid;border-width:1px 1px 1px 1px;border-color:#fff #404040 #404040 #fff;box-shadow:inset -1px -1px #808080;background:#d4d0c8"></div>
<div style="left:414px;top:299px;font-size:12.5px;line-height:14.5px;color:#000;font-weight:400;white-space:pre;">L</div>
<div style="left:420px;top:293px;width:5px;height:24px;background:#d4d0c8"></div>
<div style="left:421px;top:293px;width:1px;height:232px;background:#fff"></div>
<svg style="left:76px;top:301px" width="9" height="9"><path d="M4 1 L7.5 7.5 L0.5 7.5 Z" fill="none" stroke="#fff"/><path d="M4 1 L0.5 7.5" stroke="#808080"/></svg>
<svg style="left:10px;top:315px" width="17" height="16" viewBox="0 0 17 16"><defs><linearGradient id="fg10315" x1="0" y1="0" x2="0" y2="1"><stop offset="0" stop-color="#fff6c0"/><stop offset="0.5" stop-color="#fde47a"/><stop offset="1" stop-color="#f6c84a"/></linearGradient></defs><path d="M0.5 4 Q0.5 2.5 2 2.5 H6 L7.5 4.5 H12.5 Q13.5 4.5 13.5 5.5 V12.5 H0.5 Z" fill="#f8e090" stroke="#c8961a"/><path d="M1.5 3.5 H5.8 L6.8 5.5 H12" stroke="#fffbe8" fill="none"/><path d="M2.5 7.5 H14.5 Q15.5 7.5 15.3 8.5 L14.6 12.5 Q14.5 13.5 13.5 13.5 H1.5 Q0.5 13.5 0.6 12.5 Z" fill="url(#fg10315)" stroke="#c8961a"/><path d="M3 8.5 H14.3" stroke="#fffef0"/><path d="M14 8.5 V13" stroke="#e8b040" stroke-width="0.8"/></svg>
<div style="left:28px;top:317px;font-size:12px;line-height:14px;color:#000;font-weight:400;white-space:pre;letter-spacing:0.4px;">..</div>
<div style="left:26px;top:332px;width:394px;height:17px;background:#0a246a;outline:1px dotted #f5db95;outline-offset:-1px"></div>
<svg style="left:10px;top:332px" width="16" height="16" viewBox="0 0 16 16"><path d="M1.5 0.5 h10 l3 3 v12 h-13 z" fill="#8090b8" stroke="#404860"/><rect x="3" y="4" width="10" height="9" fill="#fff" stroke="#203070" stroke-width="1"/><rect x="3.5" y="4.5" width="9" height="2" fill="#1030a0"/><path d="M5 9.5 l2 -1.5 v3 z" fill="#d02020"/><path d="M9 9.5 l2 -1.5 v3 z" fill="#2060d0"/><circle cx="9" cy="10.5" r="1" fill="#20a040"/></svg>
<div style="left:28px;top:334px;font-size:12px;line-height:14px;color:#fff;font-weight:400;white-space:pre;letter-spacing:0.4px;">example.php</div>
<div style="right:543px;top:334px;font-size:12px;line-height:14px;color:#fff;white-space:pre;text-align:right;letter-spacing:0.4px;">120</div>
<div style="left:313px;top:334px;font-size:12px;line-height:14px;color:#fff;font-weight:400;white-space:pre;letter-spacing:0.4px;">PHP File</div>
<div style="left:413px;top:334px;font-size:12px;line-height:14px;color:#fff;font-weight:400;white-space:pre;letter-spacing:0.4px;">1</div>
<div style="left:6px;top:483px;width:414px;height:18px;background:repeating-conic-gradient(#fff 0 25%,#d4d0c8 0 50%) 0 0/2px 2px;"></div>
<div style="left:6px;top:483px;width:18px;height:18px;border:1px solid;border-color:#d4d0c8 #404040 #404040 #d4d0c8;box-shadow:inset 1px 1px #fff,inset -1px -1px #808080;background:#d4d0c8;"></div>
<div style="left:12px;top:491px;width:1px;height:1px;background:#000"></div>
<div style="left:13px;top:490px;width:1px;height:3px;background:#000"></div>
<div style="left:14px;top:489px;width:1px;height:5px;background:#000"></div>
<div style="left:15px;top:488px;width:1px;height:7px;background:#000"></div>
<div style="left:402px;top:483px;width:18px;height:18px;border:1px solid;border-color:#d4d0c8 #404040 #404040 #d4d0c8;box-shadow:inset 1px 1px #fff,inset -1px -1px #808080;background:#d4d0c8;"></div>
<div style="left:410px;top:488px;width:1px;height:7px;background:#000"></div>
<div style="left:411px;top:489px;width:1px;height:5px;background:#000"></div>
<div style="left:412px;top:490px;width:1px;height:3px;background:#000"></div>
<div style="left:413px;top:491px;width:1px;height:1px;background:#000"></div>
<div style="left:24px;top:483px;width:300px;height:18px;border:1px solid;border-color:#d4d0c8 #404040 #404040 #d4d0c8;box-shadow:inset 1px 1px #fff,inset -1px -1px #808080;background:#d4d0c8;"></div>
<div style="left:6px;top:503px;width:414px;height:20px;border:1px solid;border-color:#808080 #fff #fff #808080"></div>
<div style="left:8px;top:506px;font-size:13px;line-height:15px;color:#000;font-weight:400;white-space:pre;">Selected 1 file. Total size: 120 bytes</div>
<div style="left:425px;top:293px;width:416px;height:232px;border:1px solid;border-color:#808080 #fff #fff #808080;box-shadow:inset 1px 1px #404040,inset -1px -1px #d4d0c8;background:#d4d0c8;"></div>
<div style="left:427px;top:315px;width:394px;height:168px;background:#fff"></div>
<div style="left:427px;top:295px;width:285px;height:20px;border-style:solid;border-width:1px 1px 1px 1px;border-color:#fff #404040 #404040 #fff;box-shadow:inset -1px -1px #808080;background:#d4d0c8"></div>
<div style="left:433px;top:299px;font-size:12.5px;line-height:14.5px;color:#000;font-weight:400;white-space:pre;">Filename</div>
<div style="left:712px;top:295px;width:104px;height:20px;border-style:solid;border-width:1px 1px 1px 1px;border-color:#fff #404040 #404040 #fff;box-shadow:inset -1px -1px #808080;background:#d4d0c8"></div>
<div style="right:35px;top:299px;font-size:12.5px;line-height:14.5px;color:#000;white-space:pre;text-align:right;">Filesize</div>
<div style="left:816px;top:295px;width:15px;height:20px;border-style:solid;border-width:1px 1px 1px 1px;border-color:#fff #404040 #404040 #fff;box-shadow:inset -1px -1px #808080;background:#d4d0c8"></div>
<svg style="left:497px;top:301px" width="9" height="9"><path d="M4 1 L7.5 7.5 L0.5 7.5 Z" fill="none" stroke="#fff"/><path d="M4 1 L0.5 7.5" stroke="#808080"/></svg>
<div style="left:821px;top:295px;width:18px;height:188px;background:repeating-conic-gradient(#fff 0 25%,#d4d0c8 0 50%) 0 0/2px 2px;"></div>
<div style="left:821px;top:295px;width:18px;height:18px;border:1px solid;border-color:#d4d0c8 #404040 #404040 #d4d0c8;box-shadow:inset 1px 1px #fff,inset -1px -1px #808080;background:#d4d0c8;"></div>
<div style="left:829px;top:301px;width:1px;height:1px;background:#000"></div>
<div style="left:828px;top:302px;width:3px;height:1px;background:#000"></div>
<div style="left:827px;top:303px;width:5px;height:1px;background:#000"></div>
<div style="left:826px;top:304px;width:7px;height:1px;background:#000"></div>
<div style="left:821px;top:465px;width:18px;height:18px;border:1px solid;border-color:#d4d0c8 #404040 #404040 #d4d0c8;box-shadow:inset 1px 1px #fff,inset -1px -1px #808080;background:#d4d0c8;"></div>
<div style="left:826px;top:473px;width:7px;height:1px;background:#000"></div>
<div style="left:827px;top:474px;width:5px;height:1px;background:#000"></div>
<div style="left:828px;top:475px;width:3px;height:1px;background:#000"></div>
<div style="left:829px;top:476px;width:1px;height:1px;background:#000"></div>
<div style="left:821px;top:379px;width:18px;height:86px;border:1px solid;border-color:#d4d0c8 #404040 #404040 #d4d0c8;box-shadow:inset 1px 1px #fff,inset -1px -1px #808080;background:#d4d0c8;"></div>
<svg style="left:431px;top:315px" width="16" height="16" viewBox="0 0 16 16"><rect x="10" y="0" width="1" height="1" fill="#c8c8c8"/><rect x="10" y="2" width="1" height="1" fill="#c8c8c8"/><rect x="10" y="4" width="1" height="1" fill="#c8c8c8"/><rect x="11" y="1" width="1" height="1" fill="#c8c8c8"/><rect x="11" y="3" width="1" height="1" fill="#c8c8c8"/><rect x="11" y="5" width="1" height="1" fill="#c8c8c8"/><rect x="12" y="0" width="1" height="1" fill="#c8c8c8"/><rect x="12" y="2" width="1" height="1" fill="#c8c8c8"/><rect x="12" y="4" width="1" height="1" fill="#c8c8c8"/><rect x="13" y="1" width="1" height="1" fill="#c8c8c8"/><rect x="13" y="3" width="1" height="1" fill="#c8c8c8"/><rect x="13" y="5" width="1" height="1" fill="#c8c8c8"/><rect x="14" y="0" width="1" height="1" fill="#c8c8c8"/><rect x="14" y="2" width="1" height="1" fill="#c8c8c8"/><rect x="14" y="4" width="1" height="1" fill="#c8c8c8"/><rect x="15" y="1" width="1" height="1" fill="#c8c8c8"/><rect x="15" y="3" width="1" height="1" fill="#c8c8c8"/><rect x="15" y="5" width="1" height="1" fill="#c8c8c8"/><rect x="0" y="10" width="1" height="1" fill="#c8c8c8"/><rect x="0" y="12" width="1" height="1" fill="#c8c8c8"/><rect x="0" y="14" width="1" height="1" fill="#c8c8c8"/><rect x="1" y="11" width="1" height="1" fill="#c8c8c8"/><rect x="1" y="13" width="1" height="1" fill="#c8c8c8"/><rect x="1" y="15" width="1" height="1" fill="#c8c8c8"/><rect x="2" y="10" width="1" height="1" fill="#c8c8c8"/><rect x="2" y="12" width="1" height="1" fill="#c8c8c8"/><rect x="2" y="14" width="1" height="1" fill="#c8c8c8"/><rect x="3" y="11" width="1" height="1" fill="#c8c8c8"/><rect x="3" y="13" width="1" height="1" fill="#c8c8c8"/><rect x="3" y="15" width="1" height="1" fill="#c8c8c8"/><rect x="4" y="10" width="1" height="1" fill="#c8c8c8"/><rect x="4" y="12" width="1" height="1" fill="#c8c8c8"/><rect x="4" y="14" width="1" height="1" fill="#c8c8c8"/><rect x="5" y="11" width="1" height="1" fill="#c8c8c8"/><rect x="5" y="13" width="1" height="1" fill="#c8c8c8"/><rect x="5" y="15" width="1" height="1" fill="#c8c8c8"/><g fill="#e80000"><ellipse cx="7.6" cy="9.3" rx="4.2" ry="4.6"/><rect x="0.8" y="7.2" width="4" height="2.6" rx="1"/><rect x="10.5" y="6.9" width="5.2" height="2.6" rx="1.2"/><rect x="3.8" y="0.8" width="1.9" height="5" rx="0.8"/><rect x="6.9" y="0.4" width="2.9" height="5" rx="1"/><rect x="6.5" y="11" width="2.8" height="4.8" rx="1"/><ellipse cx="13.2" cy="12.8" rx="1.8" ry="1"/></g><path d="M2 2.8 L6 4.8" stroke="#101010" stroke-width="1.4"/></svg>
<div style="left:449px;top:317px;font-size:12px;line-height:14px;color:#000;font-weight:400;white-space:pre;letter-spacing:0.4px;">apache_pb2.gif</div>
<div style="right:35px;top:317px;font-size:12px;line-height:14px;color:#000;white-space:pre;text-align:right;letter-spacing:0.4px;">2,414</div>
<svg style="left:431px;top:332px" width="16" height="16" viewBox="0 0 16 16"><rect x="10" y="0" width="1" height="1" fill="#c8c8c8"/><rect x="10" y="2" width="1" height="1" fill="#c8c8c8"/><rect x="10" y="4" width="1" height="1" fill="#c8c8c8"/><rect x="11" y="1" width="1" height="1" fill="#c8c8c8"/><rect x="11" y="3" width="1" height="1" fill="#c8c8c8"/><rect x="11" y="5" width="1" height="1" fill="#c8c8c8"/><rect x="12" y="0" width="1" height="1" fill="#c8c8c8"/><rect x="12" y="2" width="1" height="1" fill="#c8c8c8"/><rect x="12" y="4" width="1" height="1" fill="#c8c8c8"/><rect x="13" y="1" width="1" height="1" fill="#c8c8c8"/><rect x="13" y="3" width="1" height="1" fill="#c8c8c8"/><rect x="13" y="5" width="1" height="1" fill="#c8c8c8"/><rect x="14" y="0" width="1" height="1" fill="#c8c8c8"/><rect x="14" y="2" width="1" height="1" fill="#c8c8c8"/><rect x="14" y="4" width="1" height="1" fill="#c8c8c8"/><rect x="15" y="1" width="1" height="1" fill="#c8c8c8"/><rect x="15" y="3" width="1" height="1" fill="#c8c8c8"/><rect x="15" y="5" width="1" height="1" fill="#c8c8c8"/><rect x="0" y="10" width="1" height="1" fill="#c8c8c8"/><rect x="0" y="12" width="1" height="1" fill="#c8c8c8"/><rect x="0" y="14" width="1" height="1" fill="#c8c8c8"/><rect x="1" y="11" width="1" height="1" fill="#c8c8c8"/><rect x="1" y="13" width="1" height="1" fill="#c8c8c8"/><rect x="1" y="15" width="1" height="1" fill="#c8c8c8"/><rect x="2" y="10" width="1" height="1" fill="#c8c8c8"/><rect x="2" y="12" width="1" height="1" fill="#c8c8c8"/><rect x="2" y="14" width="1" height="1" fill="#c8c8c8"/><rect x="3" y="11" width="1" height="1" fill="#c8c8c8"/><rect x="3" y="13" width="1" height="1" fill="#c8c8c8"/><rect x="3" y="15" width="1" height="1" fill="#c8c8c8"/><rect x="4" y="10" width="1" height="1" fill="#c8c8c8"/><rect x="4" y="12" width="1" height="1" fill="#c8c8c8"/><rect x="4" y="14" width="1" height="1" fill="#c8c8c8"/><rect x="5" y="11" width="1" height="1" fill="#c8c8c8"/><rect x="5" y="13" width="1" height="1" fill="#c8c8c8"/><rect x="5" y="15" width="1" height="1" fill="#c8c8c8"/><g fill="#e80000"><ellipse cx="7.6" cy="9.3" rx="4.2" ry="4.6"/><rect x="0.8" y="7.2" width="4" height="2.6" rx="1"/><rect x="10.5" y="6.9" width="5.2" height="2.6" rx="1.2"/><rect x="3.8" y="0.8" width="1.9" height="5" rx="0.8"/><rect x="6.9" y="0.4" width="2.9" height="5" rx="1"/><rect x="6.5" y="11" width="2.8" height="4.8" rx="1"/><ellipse cx="13.2" cy="12.8" rx="1.8" ry="1"/></g><path d="M2 2.8 L6 4.8" stroke="#101010" stroke-width="1.4"/></svg>
<div style="left:449px;top:334px;font-size:12px;line-height:14px;color:#000;font-weight:400;white-space:pre;letter-spacing:0.4px;">apache_pb2.png</div>
<div style="right:35px;top:334px;font-size:12px;line-height:14px;color:#000;white-space:pre;text-align:right;letter-spacing:0.4px;">1,463</div>
<svg style="left:431px;top:349px" width="16" height="16" viewBox="0 0 16 16"><rect x="10" y="0" width="1" height="1" fill="#c8c8c8"/><rect x="10" y="2" width="1" height="1" fill="#c8c8c8"/><rect x="10" y="4" width="1" height="1" fill="#c8c8c8"/><rect x="11" y="1" width="1" height="1" fill="#c8c8c8"/><rect x="11" y="3" width="1" height="1" fill="#c8c8c8"/><rect x="11" y="5" width="1" height="1" fill="#c8c8c8"/><rect x="12" y="0" width="1" height="1" fill="#c8c8c8"/><rect x="12" y="2" width="1" height="1" fill="#c8c8c8"/><rect x="12" y="4" width="1" height="1" fill="#c8c8c8"/><rect x="13" y="1" width="1" height="1" fill="#c8c8c8"/><rect x="13" y="3" width="1" height="1" fill="#c8c8c8"/><rect x="13" y="5" width="1" height="1" fill="#c8c8c8"/><rect x="14" y="0" width="1" height="1" fill="#c8c8c8"/><rect x="14" y="2" width="1" height="1" fill="#c8c8c8"/><rect x="14" y="4" width="1" height="1" fill="#c8c8c8"/><rect x="15" y="1" width="1" height="1" fill="#c8c8c8"/><rect x="15" y="3" width="1" height="1" fill="#c8c8c8"/><rect x="15" y="5" width="1" height="1" fill="#c8c8c8"/><rect x="0" y="10" width="1" height="1" fill="#c8c8c8"/><rect x="0" y="12" width="1" height="1" fill="#c8c8c8"/><rect x="0" y="14" width="1" height="1" fill="#c8c8c8"/><rect x="1" y="11" width="1" height="1" fill="#c8c8c8"/><rect x="1" y="13" width="1" height="1" fill="#c8c8c8"/><rect x="1" y="15" width="1" height="1" fill="#c8c8c8"/><rect x="2" y="10" width="1" height="1" fill="#c8c8c8"/><rect x="2" y="12" width="1" height="1" fill="#c8c8c8"/><rect x="2" y="14" width="1" height="1" fill="#c8c8c8"/><rect x="3" y="11" width="1" height="1" fill="#c8c8c8"/><rect x="3" y="13" width="1" height="1" fill="#c8c8c8"/><rect x="3" y="15" width="1" height="1" fill="#c8c8c8"/><rect x="4" y="10" width="1" height="1" fill="#c8c8c8"/><rect x="4" y="12" width="1" height="1" fill="#c8c8c8"/><rect x="4" y="14" width="1" height="1" fill="#c8c8c8"/><rect x="5" y="11" width="1" height="1" fill="#c8c8c8"/><rect x="5" y="13" width="1" height="1" fill="#c8c8c8"/><rect x="5" y="15" width="1" height="1" fill="#c8c8c8"/><g fill="#e80000"><ellipse cx="7.6" cy="9.3" rx="4.2" ry="4.6"/><rect x="0.8" y="7.2" width="4" height="2.6" rx="1"/><rect x="10.5" y="6.9" width="5.2" height="2.6" rx="1.2"/><rect x="3.8" y="0.8" width="1.9" height="5" rx="0.8"/><rect x="6.9" y="0.4" width="2.9" height="5" rx="1"/><rect x="6.5" y="11" width="2.8" height="4.8" rx="1"/><ellipse cx="13.2" cy="12.8" rx="1.8" ry="1"/></g><path d="M2 2.8 L6 4.8" stroke="#101010" stroke-width="1.4"/></svg>
<div style="left:449px;top:351px;font-size:12px;line-height:14px;color:#000;font-weight:400;white-space:pre;letter-spacing:0.4px;">apache_pb2_ani.gif</div>
<div style="right:35px;top:351px;font-size:12px;line-height:14px;color:#000;white-space:pre;text-align:right;letter-spacing:0.4px;">2,160</div>
<svg style="left:431px;top:366px" width="16" height="16" viewBox="0 0 16 16"><path d="M2.5 0.5 H10.5 L14.5 4.5 V15.5 H2.5 Z" fill="#fff" stroke="#585858"/><path d="M10.5 0.5 V4.5 H14.5" fill="#e8e8e8" stroke="#909090"/><circle cx="8.5" cy="10" r="4.4" fill="#e8600c"/><circle cx="9.3" cy="9.2" r="2.6" fill="#3a5ab0"/><path d="M4.6 8.5 Q6 5.5 9 5.8 Q7 6.8 7.2 9 Q7.6 12 11.5 12.5 Q9 14.8 6 13.5 Q4 12 4.6 8.5Z" fill="#f08018"/><circle cx="6.5" cy="9" r="1" fill="#f8c040"/></svg>
<div style="left:449px;top:368px;font-size:12px;line-height:14px;color:#000;font-weight:400;white-space:pre;letter-spacing:0.4px;">applications.html</div>
<div style="right:35px;top:368px;font-size:12px;line-height:14px;color:#000;white-space:pre;text-align:right;letter-spacing:0.4px;">2,713</div>
<svg style="left:431px;top:383px" width="16" height="16" viewBox="0 0 16 16"><defs><linearGradient id="cssg" x1="0" y1="0" x2="1" y2="1"><stop offset="0" stop-color="#f8fbff"/><stop offset="1" stop-color="#b8cce8"/></linearGradient></defs><rect x="1.5" y="2.5" width="10" height="13" fill="url(#cssg)" stroke="#98acc8"/><path d="M3 1 v3 M5 1 v3 M7 1 v3 M9 1 v3" stroke="#d0a020" stroke-width="1"/><path d="M3 7.5 h5 M3 9.5 h4" stroke="#a8bcd8"/><g fill="#f0a020"><circle cx="11.5" cy="9.5" r="3"/><rect x="10.5" y="4.8" width="2" height="9.4"/><rect x="6.8" y="8.5" width="9.2" height="2"/></g><circle cx="11.5" cy="9.5" r="1.1" fill="#fff0c0"/></svg>
<div style="left:449px;top:385px;font-size:12px;line-height:14px;color:#000;font-weight:400;white-space:pre;letter-spacing:0.4px;">bitnami.css</div>
<div style="right:35px;top:385px;font-size:12px;line-height:14px;color:#000;white-space:pre;text-align:right;letter-spacing:0.4px;">2,142</div>
<div style="left:447px;top:400px;width:374px;height:17px;background:#d4d0c8"></div>
<svg style="left:431px;top:400px" width="16" height="16" viewBox="0 0 16 16"><path d="M2.5 0.5 H10.5 L14.5 4.5 V15.5 H2.5 Z" fill="#fff" stroke="#585858"/><path d="M10.5 0.5 V4.5 H14.5" fill="#e8e8e8" stroke="#909090"/><rect x="4.5" y="5.5" width="8" height="8" fill="#f4f4f4" stroke="#303030"/><rect x="5" y="6" width="7" height="2" fill="#101080"/><rect x="5" y="6" width="1" height="1" fill="#f0d000"/><path d="M5.5 10.5 L7.5 9 V12 Z" fill="#e02020"/><path d="M9.5 9 L11 10.3 L9.5 11.6 L8 10.3 Z" fill="#2050e0"/><circle cx="10" cy="11.6" r="0.9" fill="#20b020"/></svg>
<div style="left:449px;top:402px;font-size:12px;line-height:14px;color:#000;font-weight:400;white-space:pre;letter-spacing:0.4px;">example.php</div>
<div style="right:35px;top:402px;font-size:12px;line-height:14px;color:#000;white-space:pre;text-align:right;letter-spacing:0.4px;">120</div>
<svg style="left:431px;top:417px" width="16" height="16" viewBox="0 0 16 16"><path d="M2.5 0.5 H10.5 L14.5 4.5 V15.5 H2.5 Z" fill="#fff" stroke="#585858"/><path d="M10.5 0.5 V4.5 H14.5" fill="#e8e8e8" stroke="#909090"/><rect x="4.5" y="5.5" width="8" height="8" fill="#f4f4f4" stroke="#303030"/><rect x="5" y="6" width="7" height="2" fill="#101080"/><rect x="5" y="6" width="1" height="1" fill="#f0d000"/><path d="M5.5 10.5 L7.5 9 V12 Z" fill="#e02020"/><path d="M9.5 9 L11 10.3 L9.5 11.6 L8 10.3 Z" fill="#2050e0"/><circle cx="10" cy="11.6" r="0.9" fill="#20b020"/></svg>
<div style="left:449px;top:419px;font-size:12px;line-height:14px;color:#000;font-weight:400;white-space:pre;letter-spacing:0.4px;">favicon.ico</div>
<div style="right:35px;top:419px;font-size:12px;line-height:14px;color:#000;white-space:pre;text-align:right;letter-spacing:0.4px;">7,782</div>
<svg style="left:431px;top:434px" width="16" height="16" viewBox="0 0 16 16"><path d="M2.5 0.5 H10.5 L14.5 4.5 V15.5 H2.5 Z" fill="#fff" stroke="#585858"/><path d="M10.5 0.5 V4.5 H14.5" fill="#e8e8e8" stroke="#909090"/><circle cx="8.5" cy="10" r="4.4" fill="#e8600c"/><circle cx="9.3" cy="9.2" r="2.6" fill="#3a5ab0"/><path d="M4.6 8.5 Q6 5.5 9 5.8 Q7 6.8 7.2 9 Q7.6 12 11.5 12.5 Q9 14.8 6 13.5 Q4 12 4.6 8.5Z" fill="#f08018"/><circle cx="6.5" cy="9" r="1" fill="#f8c040"/></svg>
<div style="left:449px;top:436px;font-size:12px;line-height:14px;color:#000;font-weight:400;white-space:pre;letter-spacing:0.4px;">index.html</div>
<div style="right:35px;top:436px;font-size:12px;line-height:14px;color:#000;white-space:pre;text-align:right;letter-spacing:0.4px;">202</div>
<svg style="left:431px;top:451px" width="16" height="16" viewBox="0 0 16 16"><path d="M2.5 0.5 H10.5 L14.5 4.5 V15.5 H2.5 Z" fill="#fff" stroke="#585858"/><path d="M10.5 0.5 V4.5 H14.5" fill="#e8e8e8" stroke="#909090"/><rect x="4.5" y="5.5" width="8" height="8" fill="#f4f4f4" stroke="#303030"/><rect x="5" y="6" width="7" height="2" fill="#101080"/><rect x="5" y="6" width="1" height="1" fill="#f0d000"/><path d="M5.5 10.5 L7.5 9 V12 Z" fill="#e02020"/><path d="M9.5 9 L11 10.3 L9.5 11.6 L8 10.3 Z" fill="#2050e0"/><circle cx="10" cy="11.6" r="0.9" fill="#20b020"/></svg>
<div style="left:449px;top:453px;font-size:12px;line-height:14px;color:#000;font-weight:400;white-space:pre;letter-spacing:0.4px;">index.php</div>
<div style="right:35px;top:453px;font-size:12px;line-height:14px;color:#000;white-space:pre;text-align:right;letter-spacing:0.4px;">267</div>
<div style="left:427px;top:483px;width:394px;height:18px;background:repeating-conic-gradient(#fff 0 25%,#d4d0c8 0 50%) 0 0/2px 2px;"></div>
<div style="left:427px;top:483px;width:18px;height:18px;border:1px solid;border-color:#d4d0c8 #404040 #404040 #d4d0c8;box-shadow:inset 1px 1px #fff,inset -1px -1px #808080;background:#d4d0c8;"></div>
<div style="left:433px;top:491px;width:1px;height:1px;background:#000"></div>
<div style="left:434px;top:490px;width:1px;height:3px;background:#000"></div>
<div style="left:435px;top:489px;width:1px;height:5px;background:#000"></div>
<div style="left:436px;top:488px;width:1px;height:7px;background:#000"></div>
<div style="left:803px;top:483px;width:18px;height:18px;border:1px solid;border-color:#d4d0c8 #404040 #404040 #d4d0c8;box-shadow:inset 1px 1px #fff,inset -1px -1px #808080;background:#d4d0c8;"></div>
<div style="left:811px;top:488px;width:1px;height:7px;background:#000"></div>
<div style="left:812px;top:489px;width:1px;height:5px;background:#000"></div>
<div style="left:813px;top:490px;width:1px;height:3px;background:#000"></div>
<div style="left:814px;top:491px;width:1px;height:1px;background:#000"></div>
<div style="left:445px;top:483px;width:191px;height:18px;border:1px solid;border-color:#d4d0c8 #404040 #404040 #d4d0c8;box-shadow:inset 1px 1px #fff,inset -1px -1px #808080;background:#d4d0c8;"></div>
<div style="left:821px;top:483px;width:18px;height:18px;background:#d4d0c8"></div>
<div style="left:427px;top:503px;width:413px;height:20px;border:1px solid;border-color:#808080 #fff #fff #808080"></div>
<div style="left:428px;top:506px;font-size:13px;line-height:15px;color:#000;font-weight:400;white-space:pre;">Selected 1 file. Total size: 120 bytes</div>
<div style="left:4px;top:529px;width:837px;height:87px;border:1px solid;border-color:#808080 #fff #fff #808080;box-shadow:inset 1px 1px #404040,inset -1px -1px #d4d0c8;background:#fff;"></div>
<div style="left:6px;top:531px;width:180px;height:20px;border-style:solid;border-width:1px 1px 1px 1px;border-color:#fff #404040 #404040 #fff;box-shadow:inset -1px -1px #808080;background:#d4d0c8"></div>
<div style="left:11px;top:534px;font-size:13px;line-height:15px;color:#000;font-weight:400;white-space:pre;">Server/Local file</div>
<div style="left:186px;top:531px;width:60px;height:20px;border-style:solid;border-width:1px 1px 1px 1px;border-color:#fff #404040 #404040 #fff;box-shadow:inset -1px -1px #808080;background:#d4d0c8"></div>
<div style="left:191px;top:534px;font-size:13px;line-height:15px;color:#000;font-weight:400;white-space:pre;">Directi...</div>
<div style="left:246px;top:531px;width:219px;height:20px;border-style:solid;border-width:1px 1px 1px 1px;border-color:#fff #404040 #404040 #fff;box-shadow:inset -1px -1px #808080;background:#d4d0c8"></div>
<div style="left:251px;top:534px;font-size:13px;line-height:15px;color:#000;font-weight:400;white-space:pre;">Remote file</div>
<div style="left:465px;top:531px;width:80px;height:20px;border-style:solid;border-width:1px 1px 1px 1px;border-color:#fff #404040 #404040 #fff;box-shadow:inset -1px -1px #808080;background:#d4d0c8"></div>
<div style="right:306px;top:534px;font-size:13px;line-height:15px;color:#000;white-space:pre;text-align:right;">Size</div>
<div style="left:545px;top:531px;width:60px;height:20px;border-style:solid;border-width:1px 1px 1px 1px;border-color:#fff #404040 #404040 #fff;box-shadow:inset -1px -1px #808080;background:#d4d0c8"></div>
<div style="left:550px;top:534px;font-size:13px;line-height:15px;color:#000;font-weight:400;white-space:pre;">Priority</div>
<div style="left:605px;top:531px;width:149px;height:20px;border-style:solid;border-width:1px 1px 1px 1px;border-color:#fff #404040 #404040 #fff;box-shadow:inset -1px -1px #808080;background:#d4d0c8"></div>
<div style="left:610px;top:534px;font-size:13px;line-height:15px;color:#000;font-weight:400;white-space:pre;">Status</div>
<div style="left:754px;top:531px;width:85px;height:20px;border-style:solid;border-width:1px 1px 1px 1px;border-color:#fff #404040 #404040 #fff;box-shadow:inset -1px -1px #808080;background:#d4d0c8"></div>
<div style="left:4px;top:616px;width:837px;height:1px;background:#a0a0a0"></div>
<div style="left:4px;top:617px;width:837px;height:24px;background:linear-gradient(#fcfcfc,#f0efeb 60%,#e4e2dc)"></div>
<div style="left:10px;top:617px;width:104px;height:21px;border:1px solid #9c9a94;border-top:none;border-radius:0 0 3px 3px;background:linear-gradient(#ffffff,#f6f5f2 60%,#e8e6e0)"></div>
<div style="left:16px;top:621px;font-size:11.5px;line-height:13.5px;color:#000;font-weight:700;white-space:pre;">Queued files</div>
<div style="left:114px;top:619px;width:105px;height:19px;border:1px solid #a09e98;border-radius:0 0 3px 3px;background:linear-gradient(#eceae4,#e2dfd8 45%,#cfcbc3 46%,#cfcbc3)"></div>
<div style="left:121px;top:621px;font-size:11px;line-height:13px;color:#000;font-weight:400;white-space:pre;">Failed transfers</div>
<div style="left:218px;top:619px;width:151px;height:19px;border:1px solid #a09e98;border-radius:0 0 3px 3px;background:linear-gradient(#eceae4,#e2dfd8 45%,#cfcbc3 46%,#cfcbc3)"></div>
<div style="left:225px;top:621px;font-size:11px;line-height:13px;color:#000;font-weight:400;white-space:pre;">Successful transfers (1)</div>
<svg style="left:651px;top:646px" width="14" height="16"><defs><linearGradient id="ag" x1="0" y1="0" x2="0.3" y2="1"><stop offset="0" stop-color="#e0e0e0"/><stop offset="0.5" stop-color="#707070"/><stop offset="1" stop-color="#101010"/></linearGradient></defs><rect x="0.5" y="0.5" width="13" height="15" fill="#fff" stroke="#d8d8d8"/><path d="M2.5 13 L6.5 2.5 H9 V13 H7 V10 H5.3 L4.4 13 Z M5.9 8.3 H7 V5 Z" fill="url(#ag)" fill-rule="evenodd"/><path d="M11.5 2 v1 M11.5 5 v1 M11.5 8 v1 M10 12.5 h2 M11.5 10.5 v2" stroke="#606060"/></svg>
<svg style="left:669px;top:649px" width="17" height="9"><rect x="0" y="1" width="17" height="7" rx="1" fill="#101010"/><g fill="none" stroke="#f0f0f0" stroke-width="1"><path d="M5 2.5 H2.5 V4.5 H4.5 V6.5 H2"/><rect x="7.5" y="2.5" width="2" height="4"/><rect x="12.5" y="2.5" width="2" height="4"/></g></svg>
<div style="left:690px;top:643px;width:110px;height:21px;border:1px solid;border-color:#808080 #fff #fff #808080"></div>
<div style="left:692px;top:646px;font-size:13px;line-height:15px;color:#000;font-weight:400;white-space:pre;">Queue: empty</div>
<svg style="left:803px;top:647px" width="12" height="12"><defs><radialGradient id="gl" cx="0.35" cy="0.3" r="0.7"><stop offset="0" stop-color="#3a8a3a"/><stop offset="0.45" stop-color="#0c5a0c"/><stop offset="1" stop-color="#022a02"/></radialGradient></defs><circle cx="5.8" cy="5.5" r="5" fill="#c8c8c0"/><circle cx="5.8" cy="5.5" r="4.4" fill="url(#gl)"/></svg>
<svg style="left:817px;top:647px" width="12" height="12"><defs><radialGradient id="rl" cx="0.35" cy="0.3" r="0.7"><stop offset="0" stop-color="#a03a3a"/><stop offset="0.45" stop-color="#6a0808"/><stop offset="1" stop-color="#300000"/></radialGradient></defs><circle cx="5.6" cy="5.5" r="5" fill="#c8c8c0"/><circle cx="5.6" cy="5.5" r="4.4" fill="url(#rl)"/></svg>
<svg style="left:825px;top:648px" width="16" height="16"><g stroke-width="1.6" stroke="#808080"><path d="M15 1.5 L1.5 15"/><path d="M15 5.5 L5.5 15"/><path d="M15 9.5 L9.5 15"/></g><g stroke-width="1" stroke="#fff"><path d="M14.5 0.5 L0.5 14.5"/><path d="M14.5 4.5 L4.5 14.5"/><path d="M14.5 8.5 L8.5 14.5"/></g></svg>
</body></html>
